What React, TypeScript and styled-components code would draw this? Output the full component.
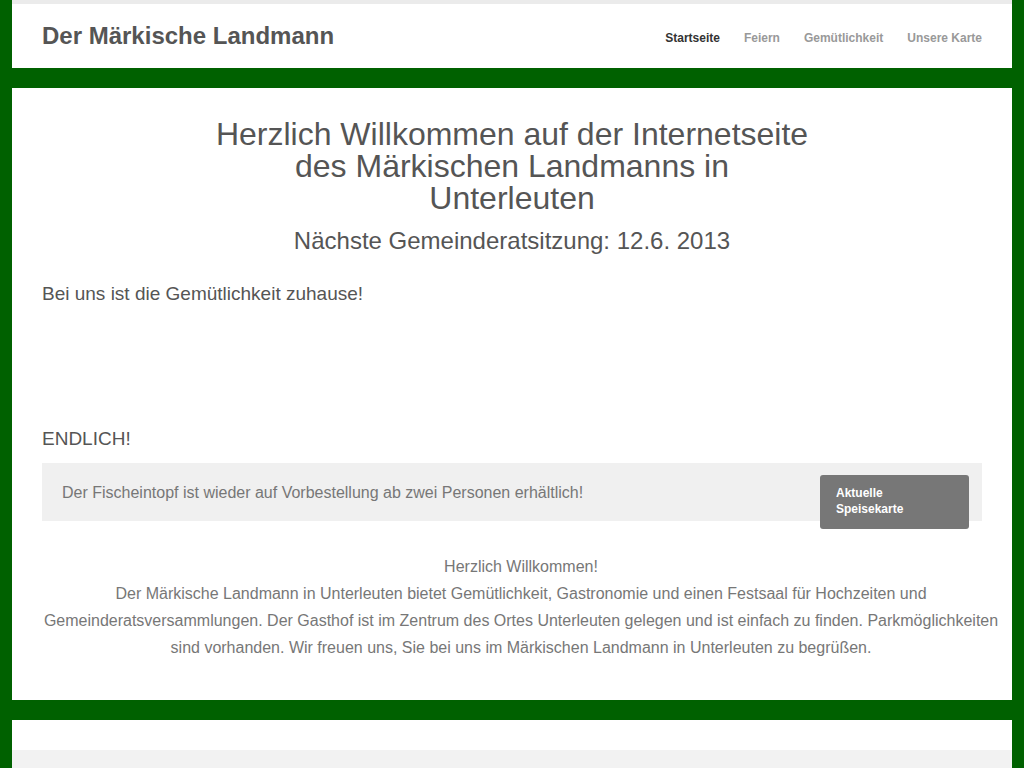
import * as React from 'react';
import styled, { createGlobalStyle } from 'styled-components';

const GREEN = '#006100';

const NAV_ITEMS = ['Startseite', 'Feiern', 'Gemütlichkeit', 'Unsere Karte'];

const GlobalStyle = createGlobalStyle`
  html, body {
    margin: 0;
    padding: 0;
    background: ${GREEN};
    font-family: "Liberation Sans", Arial, Helvetica, sans-serif;
  }
`;

const Page = styled.div`
  display: flex;
  flex-direction: column;
  gap: 20px;
  padding: 0 12px;
  min-height: 768px;
`;

/// HEADER
/** ******************************************************************* */
const HeaderBox = styled.header`
  background: #fff;
  border-top: 4px solid #ebebeb;
  height: 64px;
  padding: 0 30px;
  display: flex;
  align-items: center;
  justify-content: space-between;
`;

const Logo = styled.a`
  font-size: 24px;
  font-weight: bold;
  color: #555;
  text-decoration: none;
  padding-bottom: 1px;
`;

const Nav = styled.nav`
  display: flex;
  gap: 24px;
  padding-top: 4px;
`;

const NavItem = styled.a<{ $active?: boolean }>`
  font-size: 12px;
  font-weight: bold;
  color: ${(p) => (p.$active ? '#333' : '#999')};
  text-decoration: none;
`;

/// MAIN
/** ******************************************************************* */
const Main = styled.main`
  background: #fff;
  padding: 30px 30px 39px;
`;

const Title = styled.h1`
  max-width: 600px;
  margin: 0 auto;
  text-align: center;
  font-size: 32px;
  line-height: 32px;
  font-weight: normal;
  color: #555;
`;

const Subtitle = styled.h2`
  margin: 12px 0 0;
  text-align: center;
  font-size: 24px;
  line-height: 30px;
  font-weight: normal;
  color: #555;
`;

const Lead = styled.p`
  margin: 25px 0 0;
  font-size: 19px;
  line-height: 26px;
  color: #555;
`;

const SectionLabel = styled.h3`
  margin: 119px 0 0;
  font-size: 19px;
  line-height: 26px;
  font-weight: normal;
  color: #555;
`;

const Notice = styled.div`
  margin-top: 11px;
  background: #f0f0f0;
  display: flex;
  justify-content: space-between;
  align-items: flex-start;
  padding: 0 13px 0 20px;
`;

const NoticeText = styled.p`
  margin: 0;
  padding-top: 19px;
  font-size: 16px;
  line-height: 22px;
  color: #777;
`;

const MenuButton = styled.a`
  box-sizing: border-box;
  width: 149px;
  height: 54px;
  margin: 12px 0 -8px;
  padding: 10px 60px 0 16px;
  background: #777;
  border-radius: 3px;
  color: #fff;
  font-size: 12px;
  font-weight: bold;
  line-height: 16px;
  text-decoration: none;
`;

const Intro = styled.p`
  margin: 32px -18px 0 0;
  text-align: center;
  font-size: 16px;
  line-height: 27px;
  color: #777;
`;

/// FOOTER
/** ******************************************************************* */
const Footer = styled.footer`
  background: #fff;
  padding-top: 30px;
  flex: 1;
  display: flex;
`;

const FooterInner = styled.div`
  flex: 1;
  background: #f2f2f2;
`;

export default function App() {
  return (
    <>
      <GlobalStyle />
      <Page>
        <HeaderBox>
          <Logo href="#">Der Märkische Landmann</Logo>
          <Nav>
            {NAV_ITEMS.map((item, i) => (
              <NavItem key={item} href="#" $active={i === 0}>
                {item}
              </NavItem>
            ))}
          </Nav>
        </HeaderBox>
        <Main>
          <Title>Herzlich Willkommen auf der Internetseite des Märkischen Landmanns in Unterleuten</Title>
          <Subtitle>Nächste Gemeinderatsitzung: 12.6. 2013</Subtitle>
          <Lead>Bei uns ist die Gemütlichkeit zuhause!</Lead>
          <SectionLabel>ENDLICH!</SectionLabel>
          <Notice>
            <NoticeText>Der Fischeintopf ist wieder auf Vorbestellung ab zwei Personen erhältlich!</NoticeText>
            <MenuButton href="#">Aktuelle Speisekarte</MenuButton>
          </Notice>
          <Intro>
            Herzlich Willkommen!
            <br />
            Der Märkische Landmann in Unterleuten bietet Gemütlichkeit, Gastronomie und einen Festsaal für Hochzeiten und
            Gemeinderatsversammlungen. Der Gasthof ist im Zentrum des Ortes Unterleuten gelegen und ist einfach zu finden.
            Parkmöglichkeiten sind vorhanden. Wir freuen uns, Sie bei uns im Märkischen Landmann in Unterleuten zu begrüßen.
          </Intro>
        </Main>
        <Footer>
          <FooterInner />
        </Footer>
      </Page>
    </>
  );
}
